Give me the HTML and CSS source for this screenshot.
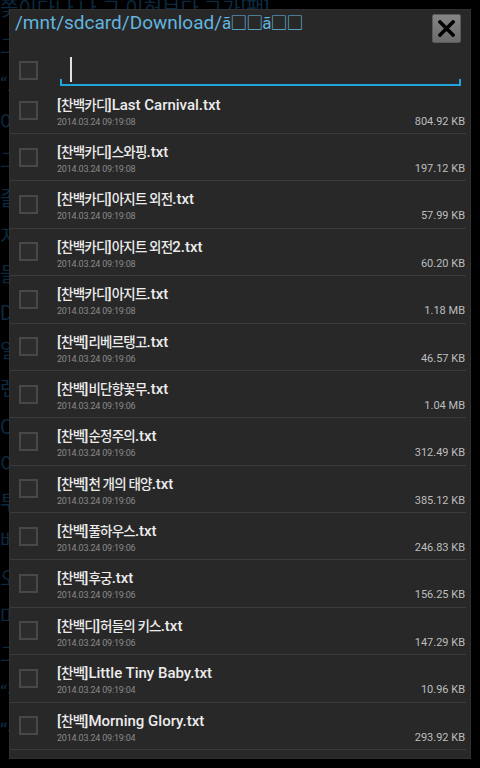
FILE: index.html
```html
<!DOCTYPE html>
<html lang="ko">
<head>
  <meta charset="UTF-8">
  <meta name="viewport" content="width=device-width, initial-scale=1.0">
  <title>파일 선택</title>
  <link rel="stylesheet" href="styles.css">
</head>
<body>
  <!-- 뒤쪽 텍스트 뷰어 화면 -->
  <div class="backdrop">
    <p>쫓이다나 나 그 이허보다 그가[팩]</p>
    <p>그렇게</p>
    <p>“그래서</p>
    <p>아무</p>
    <p>그는</p>
    <p>졸린</p>
    <p>지금</p>
    <p>들려</p>
    <p>Daily</p>
    <p>일요일</p>
    <p>렌즈</p>
    <p>Chapter</p>
    <p>이렇게</p>
    <p>투명한</p>
    <p>베란다</p>
    <p>오늘도</p>
    <p>마음</p>
    <p>그날</p>
    <p>“정말</p>
    <p>“응</p>
  </div>

  <div class="dialog">
    <div class="dialog-head">
      <div class="path">/mnt/sdcard/Download/<span class="broken">ã□□ã□□</span></div>
      <button class="close" type="button">
        <svg width="17" height="17" viewBox="0 0 17 17"><path d="M2 2L15 15M15 2L2 15" stroke="#000" stroke-width="3.6" stroke-linecap="square"/></svg>
      </button>
    </div>

    <div class="search">
      <span class="check"></span>
      <div class="field"><span class="cursor"></span></div>
    </div>

    <div class="list">
      <div class="row">
        <span class="check"></span>
        <div class="info"><div class="name">[<span class="ko">찬백카디</span>]Last Carnival.txt</div><div class="date">2014.03.24 09:19:08</div></div>
        <div class="size">804.92 KB</div>
      </div>
      <div class="row">
        <span class="check"></span>
        <div class="info"><div class="name">[<span class="ko">찬백카디</span>]<span class="ko">스와핑</span>.txt</div><div class="date">2014.03.24 09:19:08</div></div>
        <div class="size">197.12 KB</div>
      </div>
      <div class="row">
        <span class="check"></span>
        <div class="info"><div class="name">[<span class="ko">찬백카디</span>]<span class="ko">아지트 외전</span>.txt</div><div class="date">2014.03.24 09:19:08</div></div>
        <div class="size">57.99 KB</div>
      </div>
      <div class="row">
        <span class="check"></span>
        <div class="info"><div class="name">[<span class="ko">찬백카디</span>]<span class="ko">아지트 외전</span>2.txt</div><div class="date">2014.03.24 09:19:08</div></div>
        <div class="size">60.20 KB</div>
      </div>
      <div class="row">
        <span class="check"></span>
        <div class="info"><div class="name">[<span class="ko">찬백카디</span>]<span class="ko">아지트</span>.txt</div><div class="date">2014.03.24 09:19:08</div></div>
        <div class="size">1.18 MB</div>
      </div>
      <div class="row">
        <span class="check"></span>
        <div class="info"><div class="name">[<span class="ko">찬백</span>]<span class="ko">리베르탱고</span>.txt</div><div class="date">2014.03.24 09:19:06</div></div>
        <div class="size">46.57 KB</div>
      </div>
      <div class="row">
        <span class="check"></span>
        <div class="info"><div class="name">[<span class="ko">찬백</span>]<span class="ko">비단향꽃무</span>.txt</div><div class="date">2014.03.24 09:19:06</div></div>
        <div class="size">1.04 MB</div>
      </div>
      <div class="row">
        <span class="check"></span>
        <div class="info"><div class="name">[<span class="ko">찬백</span>]<span class="ko">순정주의</span>.txt</div><div class="date">2014.03.24 09:19:06</div></div>
        <div class="size">312.49 KB</div>
      </div>
      <div class="row">
        <span class="check"></span>
        <div class="info"><div class="name">[<span class="ko">찬백</span>]<span class="ko">천 개의 태양</span>.txt</div><div class="date">2014.03.24 09:19:06</div></div>
        <div class="size">385.12 KB</div>
      </div>
      <div class="row">
        <span class="check"></span>
        <div class="info"><div class="name">[<span class="ko">찬백</span>]<span class="ko">풀하우스</span>.txt</div><div class="date">2014.03.24 09:19:06</div></div>
        <div class="size">246.83 KB</div>
      </div>
      <div class="row">
        <span class="check"></span>
        <div class="info"><div class="name">[<span class="ko">찬백</span>]<span class="ko">후궁</span>.txt</div><div class="date">2014.03.24 09:19:06</div></div>
        <div class="size">156.25 KB</div>
      </div>
      <div class="row">
        <span class="check"></span>
        <div class="info"><div class="name">[<span class="ko">찬백디</span>]<span class="ko">허들의 키스</span>.txt</div><div class="date">2014.03.24 09:19:06</div></div>
        <div class="size">147.29 KB</div>
      </div>
      <div class="row">
        <span class="check"></span>
        <div class="info"><div class="name">[<span class="ko">찬백</span>]Little Tiny Baby.txt</div><div class="date">2014.03.24 09:19:04</div></div>
        <div class="size">10.96 KB</div>
      </div>
      <div class="row">
        <span class="check"></span>
        <div class="info"><div class="name">[<span class="ko">찬백</span>]Morning Glory.txt</div><div class="date">2014.03.24 09:19:04</div></div>
        <div class="size">293.92 KB</div>
      </div>
    </div>
  </div>
</body>
</html>
```

FILE: styles.css
```css
/* 전체 화면 */
body {
  margin: 0;
  width: 480px;
  height: 768px;
  overflow: hidden;
  position: relative;
  background: #000;
  font-family: Roboto, "Noto Sans CJK KR", sans-serif;
}

/* 뒤에 깔린 텍스트 */
.backdrop {
  margin-top: -10px;
  width: 470px;
  overflow: hidden;
  color: #0c2a3f;
  font-size: 20px;
  white-space: nowrap;
}

.backdrop p {
  margin: 0;
  height: 38px;
  line-height: 38px;
}

/* 대화상자 */
.dialog {
  position: absolute;
  left: 10px;
  top: 10px;
  width: 460px;
  height: 748px;
  background: #282828;
  box-shadow: 0 0 0 1px #303030;
  display: flex;
  flex-direction: column;
  overflow: hidden;
}

.dialog-head {
  height: 40px;
  display: flex;
  align-items: flex-start;
  justify-content: space-between;
}

.path {
  padding: 0 0 0 5px;
  margin-top: 1px;
  font-size: 19px;
  line-height: 24px;
  color: #63b4df;
  white-space: nowrap;
  overflow: hidden;
}

.broken {
  font-size: 17px;
  letter-spacing: -1px;
}

.close {
  margin: 4px 9px 0 0;
  width: 29px;
  height: 29px;
  padding: 0;
  border: 1px solid #5a5a5a;
  border-radius: 2px;
  background: linear-gradient(#858585, #6c6c6c);
  display: flex;
  align-items: center;
  justify-content: center;
  flex-shrink: 0;
}

/* 체크박스 */
.check {
  width: 19px;
  height: 19px;
  box-sizing: border-box;
  border: 2px solid #484848;
  background: #2c2c2c;
  margin-left: 9px;
  flex-shrink: 0;
}

/* 검색 입력 */
.search {
  height: 37px;
  display: flex;
  align-items: flex-start;
}

.search .check {
  margin-top: 11px;
}

.field {
  position: relative;
  margin-left: 22px;
  width: 401px;
  height: 36px;
  box-sizing: border-box;
  border-bottom: 2px solid #1ea5db;
}

.field::before,
.field::after {
  content: "";
  position: absolute;
  bottom: 0;
  width: 2px;
  height: 5px;
  background: #1ea5db;
}

.field::before { left: 0; }
.field::after { right: 0; }

.cursor {
  position: absolute;
  left: 10px;
  top: 7px;
  width: 2px;
  height: 25px;
  background: #e0e0e0;
}

/* 파일 목록 */
.list {
  flex: 1;
  overflow: hidden;
}

.row {
  height: 47.38px;
  box-sizing: border-box;
  margin-right: 4px;
  border-bottom: 1px solid #3b3b3b;
  display: flex;
  align-items: center;
}

.row:first-child {
  height: 47px;
}

.info {
  flex: 1;
  margin-left: 19px;
  align-self: flex-start;
  padding-top: 9px;
}

.name {
  font-size: 15px;
  font-weight: 500;
  line-height: 18px;
  color: #ececec;
  white-space: nowrap;
}

/* 한글 부분은 원본 폰트처럼 좁게 */
.ko {
  font-size: 13.5px;
  letter-spacing: -0.8px;
}

.date {
  margin-top: 2px;
  font-size: 9px;
  line-height: 12px;
  letter-spacing: -0.2px;
  color: #8a8a8a;
}

.size {
  align-self: flex-start;
  margin-top: 29px;
  padding-right: 1px;
  font-size: 11px;
  line-height: 12px;
  color: #bdbdbd;
}
```
